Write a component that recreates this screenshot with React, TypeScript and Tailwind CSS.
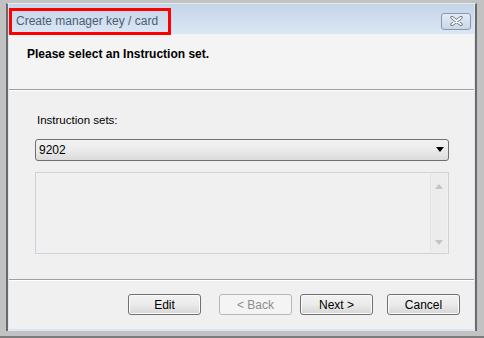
const font = { fontFamily: '"Liberation Sans", Arial, sans-serif' }

function WinButton({ label, disabled, className }: { label: string; disabled?: boolean; className?: string }) {
  return (
    <button
      disabled={disabled}
      className={
        "h-[21px] w-[73px] rounded-[3px] border text-[12px] leading-none " +
        (disabled
          ? "border-[#b5b9bc] bg-[#f4f4f4] text-[#8d8d8d] "
          : "border-[#707070] bg-gradient-to-b from-[#f2f2f2] via-[#ebebeb] to-[#d6d6d6] text-black shadow-[inset_0_0_0_1px_#fbfbfb] ") +
        (className ?? "")
      }
    >
      {label}
    </button>
  )
}

export default function App() {
  return (
    <div className="w-[484px] h-[338px] bg-[#c2c2c2] border-b-2 border-[#7c7c7c] pt-[3px] pl-[6px] pr-[7px] pb-[5px]" style={font}>
      <div className="relative h-full border-l-2 border-r-2 border-t border-[#6a6a6a] border-t-[#e9e9e9] bg-[#dbe6f4] px-px pb-[2px] flex flex-col">
        {/* title bar */}
        <div className="h-[30px] shrink-0 bg-gradient-to-b from-[#c3d5e9] to-[#dce7f4] flex items-center justify-between pl-[7px] pr-[3px] pt-[4px]">
          <span className="text-[12px] text-[#4d5d72]">Create manager key / card</span>
          <div className="w-[30px] h-[17px] rounded-[3px] border border-[#8798ad] bg-gradient-to-b from-[#e3ebf5] to-[#c9d7e8] flex items-center justify-center">
            <svg width="13" height="10" viewBox="0 0 13 10">
              <path d="M2 1.5 L11 8.5 M11 1.5 L2 8.5" stroke="#5a6577" strokeWidth="3.2" strokeLinecap="round" />
              <path d="M2 1.5 L11 8.5 M11 1.5 L2 8.5" stroke="#ffffff" strokeWidth="1.6" strokeLinecap="round" />
            </svg>
          </div>
        </div>

        {/* header */}
        <div className="h-[56px] shrink-0 bg-[#f4f4f4] pl-[18px] pt-[11px] border-b border-[#a0a0a0]">
          <p className="text-[12px] font-bold text-black">Please select an Instruction set.</p>
        </div>

        {/* body */}
        <div className="flex-1 bg-[#f0f0f0] border-t border-white border-b border-b-[#a0a0a0] pl-[26px] pr-[25px] pt-[24px]">
          <p className="ml-[2px] text-[11.5px] text-black leading-none">Instruction sets:</p>
          <div className="mt-[12px] h-[22px] rounded-[3px] border border-[#707070] bg-gradient-to-b from-[#f2f2f2] via-[#ebebeb] to-[#dbdbdb] flex items-center justify-between pl-[3px] pr-[4px]">
            <span className="text-[12px] text-black">9202</span>
            <svg width="8" height="5" viewBox="0 0 8 5">
              <path d="M0 0 H8 L4 5 Z" fill="#000" />
            </svg>
          </div>
          <div className="mt-[11px] h-[82px] border border-[#ccd3da] bg-[#f0f0f0] flex justify-end p-px">
            <div className="w-[17px] h-full bg-[#ececec] border-l border-[#e4e4e4] flex flex-col items-center justify-between pt-[10px] pb-[7px]">
              <svg width="8" height="5" viewBox="0 0 8 5">
                <path d="M0 5 H8 L4 0 Z" fill="#c4c4c4" />
              </svg>
              <svg width="8" height="5" viewBox="0 0 8 5">
                <path d="M0 0 H8 L4 5 Z" fill="#c4c4c4" />
              </svg>
            </div>
          </div>
        </div>

        {/* footer */}
        <div className="h-[49px] shrink-0 bg-[#f0f0f0] border-t border-white flex items-start justify-end pr-[14px] pt-[13px]">
          <WinButton label="Edit" className="mr-[18px]" />
          <WinButton label="< Back" disabled className="mr-[8px] w-[72px]" />
          <WinButton label="Next >" className="mr-[14px]" />
          <WinButton label="Cancel" />
        </div>

        {/* red annotation box */}
        <div className="absolute left-[1px] top-[4px] w-[162px] h-[27px] border-[3px] border-[#ff0000]" />
      </div>
    </div>
  )
}
